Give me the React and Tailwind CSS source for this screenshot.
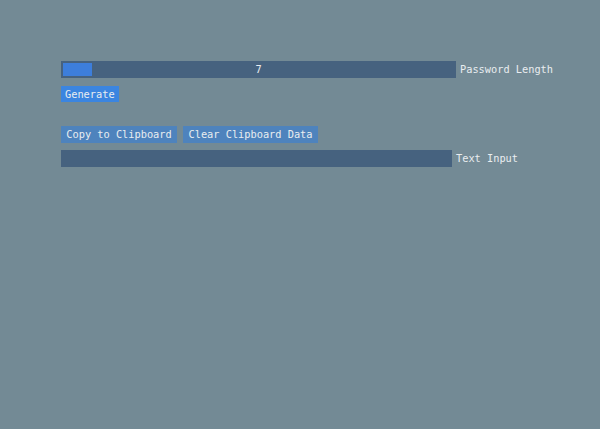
import React, { useState } from 'react';

const font = { fontFamily: '"DejaVu Sans Mono", "Liberation Mono", monospace' };

const App = () => {
  const [length] = useState(7);
  const [text, setText] = useState('');

  return (
    <div
      className="w-[600px] h-[429px] bg-[#738a95] text-[#e9edf0] text-[10.3px] leading-none pl-[61px] pt-[61px] flex flex-col"
      style={font}
    >
      <div className="flex items-center">
        <div className="relative w-[395px] h-[17px] bg-[#46627f] flex items-center justify-center">
          <div className="absolute left-[2px] top-[2px] w-[29px] h-[13px] bg-[#3d7edb]" />
          <span className="relative">{length}</span>
        </div>
        <span className="ml-[4px]">Password Length</span>
      </div>

      <div className="mt-[8px] flex">
        <button className="h-[16px] px-[4px] bg-[#3b85e0] flex items-center">Generate</button>
      </div>

      <div className="mt-[24px] flex gap-[6px]">
        <button className="h-[17px] w-[116px] bg-[#4e83bd] flex items-center justify-center">Copy to Clipboard</button>
        <button className="h-[17px] w-[135px] bg-[#4e83bd] flex items-center justify-center">Clear Clipboard Data</button>
      </div>

      <div className="mt-[7px] flex items-center">
        <input
          value={text}
          onChange={(e) => setText(e.target.value)}
          className="w-[391px] h-[17px] bg-[#46627f] outline-none px-[4px]"
          style={font}
        />
        <span className="ml-[4px]">Text Input</span>
      </div>
    </div>
  );
};

export default App;
